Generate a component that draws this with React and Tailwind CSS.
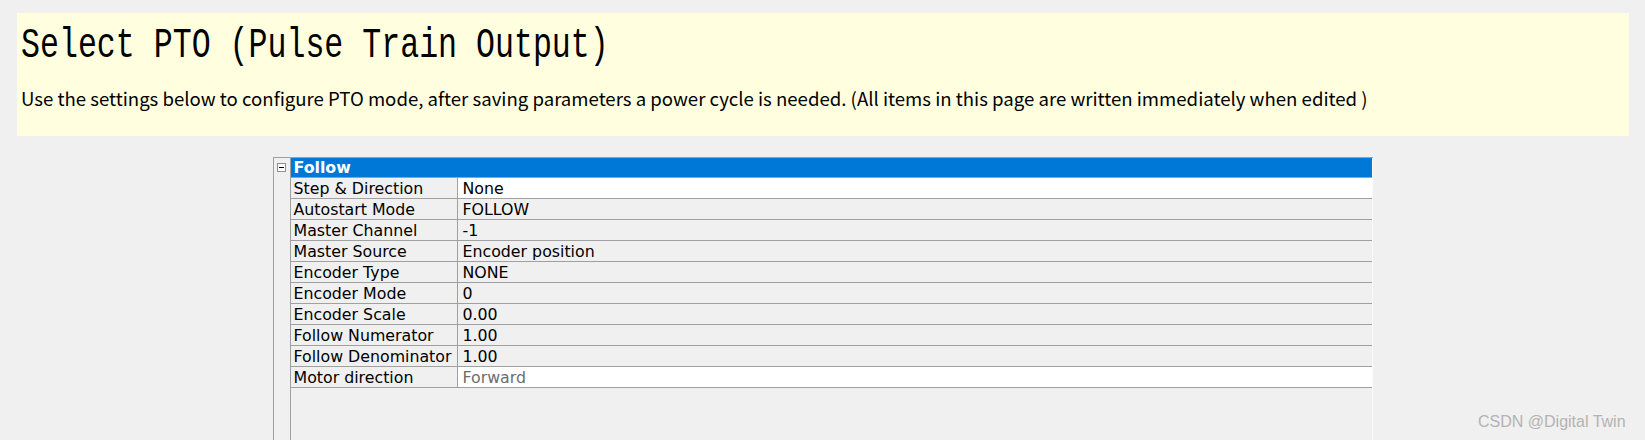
import React from "react";

const rows = [
  { label: "Step & Direction", value: "None", editable: true },
  { label: "Autostart Mode", value: "FOLLOW" },
  { label: "Master Channel", value: "-1" },
  { label: "Master Source", value: "Encoder position" },
  { label: "Encoder Type", value: "NONE" },
  { label: "Encoder Mode", value: "0" },
  { label: "Encoder Scale", value: "0.00" },
  { label: "Follow Numerator", value: "1.00" },
  { label: "Follow Denominator", value: "1.00" },
  { label: "Motor direction", value: "Forward", editable: true, muted: true },
];

function PropertyRow({ row }) {
  return (
    <div className="flex h-[21px] border-b border-[#a0a0a0] text-[15.8px] leading-[22px]">
      <div className="w-[167px] shrink-0 overflow-hidden border-r border-[#a0a0a0] bg-[#f0f0f0] pl-[3px] text-black whitespace-nowrap">
        {row.label}
      </div>
      <div
        className={
          (row.editable ? "bg-white " : "bg-[#f0f0f0] ") +
          (row.muted ? "text-[#6d6d6d] " : "text-black ") +
          "flex-1 overflow-hidden pl-[5px] whitespace-nowrap"
        }
      >
        {row.value}
      </div>
    </div>
  );
}

export default function App() {
  return (
    <div className="relative h-[440px] overflow-hidden bg-[#f0f0f0]">
      <div className="pl-[17px] pr-[16px] pt-[13px]">
        <div className="h-[123px] bg-[#ffffe0] pl-1 pt-[22px]">
          <h1
            className="origin-bottom scale-y-[1.32] text-[31.6px] leading-[31px] text-black whitespace-nowrap"
            style={{ fontFamily: '"Liberation Mono", monospace' }}
          >
            Select PTO (Pulse Train Output)
          </h1>
          <p
            className="mt-[20px] text-[18.6px] leading-[24px] text-black whitespace-nowrap"
            style={{ fontFamily: '"Noto Sans CJK SC", "Noto Sans", sans-serif' }}
          >
            Use the settings below to configure PTO mode, after saving parameters a power cycle is needed. (All items in this page are written immediately when edited )
          </p>
        </div>
      </div>

      <div
        className="mx-auto mt-[21px] flex h-[283px] w-[1100px] border-t border-[#a0a0a0]"
        style={{ fontFamily: '"DejaVu Sans", sans-serif' }}
      >
        {/* tree gutter with collapse box */}
        <div className="w-[18px] shrink-0 border-x border-[#a0a0a0] bg-[#f0f0f0] pl-[3px] pt-[5px]">
          <div className="flex h-[9px] w-[9px] items-center justify-center border border-[#919191] bg-white">
            <div className="h-px w-[5px] bg-black" />
          </div>
        </div>

        <div className="flex-1 border-r border-[#fafafa]">
          <div className="h-[20px] overflow-hidden border-b border-[#a0a0a0] bg-[#0078d7] pl-[3px] text-[15.8px] font-bold leading-[20px] text-white">
            Follow
          </div>
          {rows.map((row) => (
            <PropertyRow key={row.label} row={row} />
          ))}
        </div>
      </div>

      <div
        className="absolute left-[1478px] top-[414px] text-[16px] leading-[16px] text-[#b3b3b3] whitespace-nowrap"
        style={{ fontFamily: '"Liberation Sans", Arial, sans-serif' }}
      >
        CSDN @Digital Twin
      </div>
    </div>
  );
}
